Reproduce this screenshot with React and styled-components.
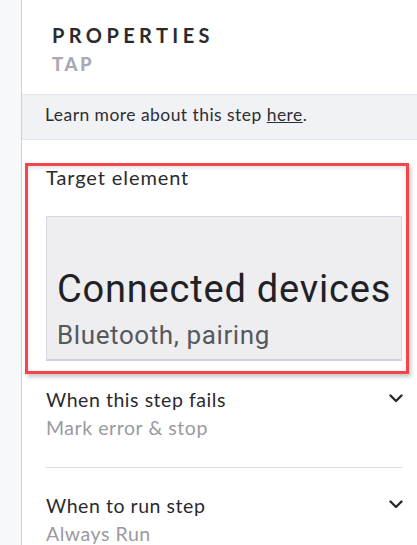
import React from "react";
import styled, { createGlobalStyle } from "styled-components";

const Global = createGlobalStyle`
  html, body { margin: 0; padding: 0; background: #ffffff; }
  body { font-family: Lato, "Open Sans", sans-serif; }
  * { box-sizing: border-box; }
`;

const Layout = styled.div`
  display: flex;
  width: 417px;
  height: 545px;
  overflow: hidden;
`;

const Gutter = styled.div`
  width: 21.5px;
  flex: none;
  background: #f7f8fa;
  border-right: 1.5px solid #c9d3dd;
`;

const Panel = styled.div`
  flex: 1;
  display: flex;
  flex-direction: column;
  background: #fff;
  & > * { flex: none; }
`;

const Header = styled.div`
  padding: 25px 0 0 30.5px;
  height: 95px;
  border-bottom: 1px solid #e2e4ea;
`;

const Title = styled.div`
  font-size: 20px;
  font-weight: 700;
  letter-spacing: 4.4px;
  color: #2b2b2f;
  line-height: 20px;
`;

const Subtitle = styled.div`
  margin-top: 11.3px;
  font-size: 18.5px;
  font-weight: 900;
  letter-spacing: 2.6px;
  color: #a9a9b6;
  line-height: 17px;
`;

const InfoBand = styled.div`
  height: 45px;
  background: #f1f2f5;
  border-bottom: 1px solid #e6e8ee;
  padding: 10px 0 0 23.5px;
  font-size: 17.5px;
  line-height: 20px;
  letter-spacing: 0.45px;
  color: #2e2e33;
  a { color: inherit; text-decoration: underline; }
`;

const Highlight = styled.div`
  margin: 23px 8px 0 3.5px;
  border: 3px solid #f5444a;
  box-shadow: 2px 3px 4px rgba(0, 0, 0, 0.22), inset 0 2px 4px rgba(0, 0, 0, 0.12);
  padding: 0 4px 10px 18px;
`;

const FieldLabel = styled.div`
  font-size: 20px;
  letter-spacing: 0.9px;
  color: #2a2a2e;
  line-height: 22px;
`;

const ElementShot = styled.div`
  margin-top: 28px;
  height: 145px;
  background: #eeeef1;
  border: 1px solid #d8d9e2;
  border-bottom: 2px solid #cfd1dc;
  padding: 53px 0 0 10px;
  font-family: Roboto, "Noto Sans", sans-serif;
`;

const ShotTitle = styled.div`
  font-size: 38px;
  color: #1f2124;
  line-height: 38px;
  letter-spacing: 0.8px;
`;

const ShotSub = styled.div`
  margin-top: 13px;
  font-size: 26px;
  color: #55595e;
  line-height: 28px;
  letter-spacing: 0.6px;
`;

const Section = styled.div`
  margin: 0 15px 0 24.5px;
  padding: ${(p) => p.$pad};
  border-bottom: ${(p) => (p.$divider ? "1px solid #dcdde3" : "none")};
  display: flex;
  justify-content: space-between;
  align-items: flex-start;
`;

const SectionText = styled.div`
  display: flex;
  flex-direction: column;
  gap: 6px;
`;

const SectionTitle = styled.div`
  font-size: 19.5px;
  letter-spacing: 0.55px;
  color: #2a2a2e;
  line-height: 22px;
`;

const SectionValue = styled.div`
  font-size: 19.5px;
  letter-spacing: 0.55px;
  color: #9a9aa2;
  line-height: 22px;
`;

const Chevron = styled.svg`
  width: 14px;
  height: 9px;
  margin-top: 5.5px;
  margin-right: -1px;
`;

const ChevronIcon = () => (
  <Chevron viewBox="0 0 14 9">
    <path d="M1.5 1.5 L7 7 L12.5 1.5" fill="none" stroke="#2a2a2e" strokeWidth="2.4" strokeLinecap="round" strokeLinejoin="round" />
  </Chevron>
);

export default function App() {
  return (
    <>
      <Global />
      <Layout>
        <Gutter />
        <Panel>
          <Header>
            <Title>PROPERTIES</Title>
            <Subtitle>TAP</Subtitle>
          </Header>
          <InfoBand>
            Learn more about this step <a href="#">here</a>.
          </InfoBand>
          <Highlight>
            <FieldLabel>Target element</FieldLabel>
            <ElementShot>
              <ShotTitle>Connected devices</ShotTitle>
              <ShotSub>Bluetooth, pairing</ShotSub>
            </ElementShot>
          </Highlight>
          <Section $pad="14.5px 0 28.5px 0" $divider>
            <SectionText>
              <SectionTitle>When this step fails</SectionTitle>
              <SectionValue>Mark error &amp; stop</SectionValue>
            </SectionText>
            <ChevronIcon />
          </Section>
          <Section $pad="26.5px 0 0 0">
            <SectionText>
              <SectionTitle>When to run step</SectionTitle>
              <SectionValue>Always Run</SectionValue>
            </SectionText>
            <ChevronIcon />
          </Section>
        </Panel>
      </Layout>
    </>
  );
}
